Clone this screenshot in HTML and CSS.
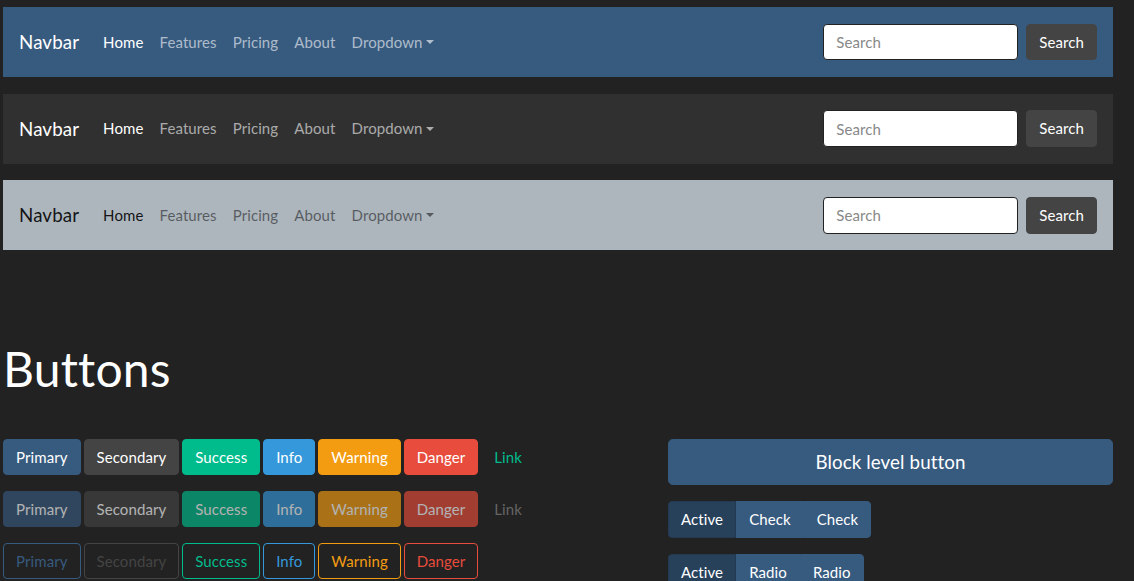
FILE: index.html
```html
<!DOCTYPE html>
<html lang="en">
<head>
<meta charset="utf-8">
<title>Darkly</title>
<link rel="stylesheet" href="styles.css">
</head>
<body>
<div class="page">
  <nav class="navbar navbar-primary">
    <span class="brand">Navbar</span>
    <ul class="nav">
      <li class="nav-link active">Home</li>
      <li class="nav-link">Features</li>
      <li class="nav-link">Pricing</li>
      <li class="nav-link">About</li>
      <li class="nav-link dropdown">Dropdown<span class="caret"></span></li>
    </ul>
    <form class="search-form">
      <input class="search-input" type="text" placeholder="Search">
      <button class="btn btn-secondary" type="button">Search</button>
    </form>
  </nav>

  <nav class="navbar navbar-dark">
    <span class="brand">Navbar</span>
    <ul class="nav">
      <li class="nav-link active">Home</li>
      <li class="nav-link">Features</li>
      <li class="nav-link">Pricing</li>
      <li class="nav-link">About</li>
      <li class="nav-link dropdown">Dropdown<span class="caret"></span></li>
    </ul>
    <form class="search-form">
      <input class="search-input" type="text" placeholder="Search">
      <button class="btn btn-secondary" type="button">Search</button>
    </form>
  </nav>

  <nav class="navbar navbar-light">
    <span class="brand">Navbar</span>
    <ul class="nav">
      <li class="nav-link active">Home</li>
      <li class="nav-link">Features</li>
      <li class="nav-link">Pricing</li>
      <li class="nav-link">About</li>
      <li class="nav-link dropdown">Dropdown<span class="caret"></span></li>
    </ul>
    <form class="search-form">
      <input class="search-input" type="text" placeholder="Search">
      <button class="btn btn-secondary" type="button">Search</button>
    </form>
  </nav>

  <section class="section">
    <h1 class="section-title">Buttons</h1>
    <div class="row">
      <div class="col-left">
        <div class="btn-row">
          <button class="btn btn-primary">Primary</button>
          <button class="btn btn-secondary">Secondary</button>
          <button class="btn btn-success">Success</button>
          <button class="btn btn-info">Info</button>
          <button class="btn btn-warning">Warning</button>
          <button class="btn btn-danger">Danger</button>
          <button class="btn btn-link">Link</button>
        </div>
        <div class="btn-row disabled">
          <button class="btn btn-primary">Primary</button>
          <button class="btn btn-secondary">Secondary</button>
          <button class="btn btn-success">Success</button>
          <button class="btn btn-info">Info</button>
          <button class="btn btn-warning">Warning</button>
          <button class="btn btn-danger">Danger</button>
          <button class="btn btn-link">Link</button>
        </div>
        <div class="btn-row">
          <button class="btn btn-outline-primary">Primary</button>
          <button class="btn btn-outline-secondary">Secondary</button>
          <button class="btn btn-outline-success">Success</button>
          <button class="btn btn-outline-info">Info</button>
          <button class="btn btn-outline-warning">Warning</button>
          <button class="btn btn-outline-danger">Danger</button>
        </div>
      </div>
      <div class="col-right">
        <button class="btn btn-primary btn-lg btn-block">Block level button</button>
        <div class="btn-group">
          <button class="btn btn-primary active">Active</button>
          <button class="btn btn-primary">Check</button>
          <button class="btn btn-primary">Check</button>
        </div>
        <div class="btn-group">
          <button class="btn btn-primary active">Active</button>
          <button class="btn btn-primary">Radio</button>
          <button class="btn btn-primary">Radio</button>
        </div>
      </div>
    </div>
  </section>
</div>
</body>
</html>
```

FILE: styles.css
```css
* { box-sizing: border-box; }

html, body {
  margin: 0;
  padding: 0;
  background: #222222;
  color: #ffffff;
  font-family: Lato, "Liberation Sans", sans-serif;
  font-size: 15px;
  line-height: 1.5;
  letter-spacing: 0.1px;
  overflow: hidden;
}

.page {
  width: 1113px;
  padding: 7px 0 0 3px;
}

/* Navbars */
.navbar {
  display: flex;
  align-items: center;
  height: 70.125px;
  padding: 0 16px;
  margin-bottom: 16.5px;
}
.navbar-primary { background: #375a7f; }
.navbar-dark { background: #303030; }
.navbar-light { background: #adb5bd; }

.brand {
  font-size: 18.75px;
  line-height: 1.5;
  padding: 5px 0;
  margin-right: 16px;
  white-space: nowrap;
}
.navbar-primary .brand, .navbar-dark .brand { color: #ffffff; }
.navbar-light .brand { color: rgba(0, 0, 0, 0.9); }

.nav {
  display: flex;
  list-style: none;
  margin: 0;
  padding: 0;
}
.nav-link {
  padding: 8px;
  white-space: nowrap;
}
.navbar-primary .nav-link, .navbar-dark .nav-link { color: rgba(255, 255, 255, 0.6); }
.navbar-primary .nav-link.active, .navbar-dark .nav-link.active { color: #ffffff; }
.navbar-light .nav-link { color: rgba(0, 0, 0, 0.5); }
.navbar-light .nav-link.active { color: rgba(0, 0, 0, 0.9); }

.caret {
  display: inline-block;
  margin-left: 0.255em;
  vertical-align: 0.255em;
  width: 0;
  height: 0;
  border-top: 0.3em solid currentColor;
  border-left: 0.3em solid transparent;
  border-right: 0.3em solid transparent;
}

.search-form {
  margin-left: auto;
  display: flex;
  align-items: center;
  gap: 8px;
}
.search-input {
  width: 195px;
  height: 36.5px;
  padding: 6px 12px;
  font-family: inherit;
  font-size: 15px;
  line-height: 1.5;
  letter-spacing: inherit;
  color: #444444;
  background: #ffffff;
  border: 1px solid #222222;
  border-radius: 4px;
  outline: none;
}
.search-input::placeholder { color: #888888; opacity: 1; }

/* Buttons */
.btn {
  display: inline-block;
  font-family: inherit;
  font-size: 15px;
  line-height: 1.5;
  letter-spacing: inherit;
  padding: 6px 12px;
  border: 1px solid transparent;
  border-radius: 4px;
  color: #ffffff;
  background: transparent;
  text-align: center;
  white-space: nowrap;
  cursor: pointer;
}
.btn-primary { background: #375a7f; border-color: #375a7f; }
.btn-secondary { background: #444444; border-color: #444444; }
.btn-success { background: #00bc8c; border-color: #00bc8c; }
.btn-info { background: #3498db; border-color: #3498db; }
.btn-warning { background: #f39c12; border-color: #f39c12; }
.btn-danger { background: #e74c3c; border-color: #e74c3c; }
.btn-link { color: #00bc8c; }

.btn-outline-primary { color: #375a7f; border-color: #375a7f; }
.btn-outline-secondary { color: #444444; border-color: #444444; }
.btn-outline-success { color: #00bc8c; border-color: #00bc8c; }
.btn-outline-info { color: #3498db; border-color: #3498db; }
.btn-outline-warning { color: #f39c12; border-color: #f39c12; }
.btn-outline-danger { color: #e74c3c; border-color: #e74c3c; }

.disabled .btn { opacity: 0.65; }
.disabled .btn-link { color: #888888; opacity: 0.65; }

.section-title {
  font-size: 48px;
  font-weight: 400;
  line-height: 1.2;
  letter-spacing: 0.2px;
  margin: 89.5px 0 0 0;
  height: 99px;
}

.row {
  display: flex;
}
.col-left {
  width: 665px;
  flex: none;
}
.col-right {
  width: 445px;
  flex: none;
  display: flex;
  flex-direction: column;
  align-items: flex-start;
}

.btn-row {
  display: flex;
  gap: 2.9px;
  margin-bottom: 15.5px;
}

.btn-lg {
  font-size: 18.75px;
  padding: 8px 16px;
  border-radius: 4.8px;
}
.btn-block {
  width: 100%;
  margin-bottom: 16px;
}

.btn-group {
  display: inline-flex;
  margin-bottom: 16px;
}
.btn-group .btn { border-radius: 0; }
.btn-group .btn:first-child { border-radius: 4px 0 0 4px; }
.btn-group .btn:last-child { border-radius: 0 4px 4px 0; }
.btn-group .btn.active { background: #28415b; border-color: #243a52; }
```
